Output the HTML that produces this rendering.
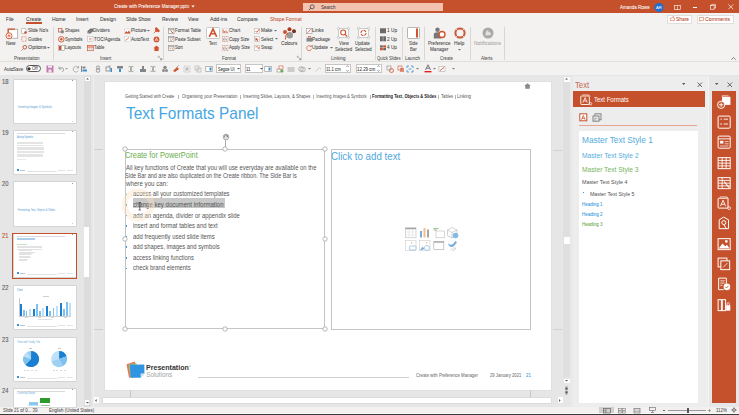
<!DOCTYPE html>
<html><head><meta charset="utf-8"><style>
html,body{margin:0;padding:0;}
body{width:739px;height:415px;overflow:hidden;position:relative;background:#E6E6E6;font-family:"Liberation Sans",sans-serif;}
body>*{position:absolute;}
span{white-space:nowrap;transform-origin:0 0;}
svg{overflow:visible;}
</style></head><body>
<div style="left:0px;top:0px;width:739.00px;height:13.00px;background:#C5502C;"></div>
<div style="left:0px;top:13px;width:739.00px;height:48.00px;background:#F3F2F1;"></div>
<div style="left:0px;top:61px;width:739.00px;height:1.00px;background:#E1DFDD;"></div>
<div style="left:0px;top:62px;width:739.00px;height:13.00px;background:#F3F2F1;"></div>
<div style="left:0px;top:75px;width:739.00px;height:331.70px;background:#E6E6E6;"></div>
<div style="left:0px;top:406.5px;width:739.00px;height:6.70px;background:#F3F1EF;"></div>
<div style="left:0px;top:413.2px;width:739.00px;height:0.80px;background:#F8F8F8;"></div>
<div style="left:0px;top:414px;width:739.00px;height:1.00px;background:#3A3A3A;"></div>
<span style="left:113.77px;top:4px;font-size:5.6px;line-height:5.6px;color:#ffffff;-webkit-text-stroke:0.06px #ffffff;transform:scaleX(0.811);">Create with Preference Manager.pptx</span>
<svg style="left:191px;top:5px;" width="4" height="3" viewBox="0 0 4 3"><path d="M0.3 0.5 L3.7 0.5 L2 2.5Z" fill="#fff"/></svg>
<div style="left:303px;top:2.5px;width:140.00px;height:8.00px;background:#F4C3AF;"></div>
<svg style="left:308px;top:3.5px;" width="7" height="7" viewBox="0 0 7 7"><circle cx="4.2" cy="2.8" r="2" fill="none" stroke="#444" stroke-width="0.8"/><path d="M2.8 4.2 L0.8 6.2" stroke="#444" stroke-width="0.9"/></svg>
<span style="left:320.82px;top:5px;font-size:5.4px;line-height:5.4px;color:#444444;-webkit-text-stroke:0.06px #444444;transform:scaleX(0.844);">Search</span>
<span style="left:620.30px;top:5px;font-size:5.6px;line-height:5.6px;color:#ffffff;-webkit-text-stroke:0.06px #ffffff;transform:scaleX(0.808);">Amanda Rowe</span>
<svg style="left:654px;top:2.5px;" width="10" height="10" viewBox="0 0 10 10"><circle cx="5" cy="4.5" r="4.6" fill="#1F6FD0"/><text x="5" y="6.2" font-size="4.2" fill="#fff" text-anchor="middle" font-family="Liberation Sans">AR</text></svg>
<svg style="left:674px;top:4.5px;" width="7" height="5" viewBox="0 0 7 5"><rect x="0.4" y="0.4" width="6.2" height="4.2" fill="none" stroke="#fff" stroke-width="0.6"/><path d="M3.5 0.4 V4.6" stroke="#fff" stroke-width="0.5"/></svg>
<div style="left:692.8px;top:6.6px;width:4.40px;height:0.60px;background:#ffffff;"></div>
<svg style="left:709.5px;top:4.3px;" width="6" height="6" viewBox="0 0 6 6"><rect x="0.4" y="1.6" width="3.8" height="3.6" fill="none" stroke="#fff" stroke-width="0.6"/><path d="M1.6 1.6 V0.4 H5.5 V4 H4.2" fill="none" stroke="#fff" stroke-width="0.6"/></svg>
<svg style="left:727.5px;top:4px;" width="6" height="6" viewBox="0 0 6 6"><path d="M0.4 0.4 L5.2 5.2 M5.2 0.4 L0.4 5.2" stroke="#fff" stroke-width="0.7"/></svg>
<span style="left:6.12px;top:17px;font-size:5.6px;line-height:5.6px;color:#444444;-webkit-text-stroke:0.06px #444444;transform:scaleX(0.848);">File</span>
<span style="left:25.74px;top:17px;font-size:5.6px;line-height:5.6px;color:#444444;-webkit-text-stroke:0.06px #444444;transform:scaleX(0.919);">Create</span>
<span style="left:51.59px;top:17px;font-size:5.6px;line-height:5.6px;color:#444444;-webkit-text-stroke:0.06px #444444;transform:scaleX(0.910);">Home</span>
<span style="left:76.36px;top:17px;font-size:5.6px;line-height:5.6px;color:#444444;-webkit-text-stroke:0.06px #444444;transform:scaleX(0.881);">Insert</span>
<span style="left:99.59px;top:17px;font-size:5.6px;line-height:5.6px;color:#444444;-webkit-text-stroke:0.06px #444444;transform:scaleX(0.924);">Design</span>
<span style="left:126.40px;top:17px;font-size:5.6px;line-height:5.6px;color:#444444;-webkit-text-stroke:0.06px #444444;transform:scaleX(0.873);">Slide Show</span>
<span style="left:161.51px;top:17px;font-size:5.6px;line-height:5.6px;color:#444444;-webkit-text-stroke:0.06px #444444;transform:scaleX(0.869);">Review</span>
<span style="left:187.90px;top:17px;font-size:5.6px;line-height:5.6px;color:#444444;-webkit-text-stroke:0.06px #444444;transform:scaleX(0.886);">View</span>
<span style="left:209.50px;top:17px;font-size:5.6px;line-height:5.6px;color:#444444;-webkit-text-stroke:0.06px #444444;transform:scaleX(0.919);">Add-ins</span>
<span style="left:237.45px;top:17px;font-size:5.6px;line-height:5.6px;color:#444444;-webkit-text-stroke:0.06px #444444;transform:scaleX(0.909);">Compare</span>
<span style="left:269.90px;top:17px;font-size:5.6px;line-height:5.6px;color:#C8573A;-webkit-text-stroke:0.06px #C8573A;transform:scaleX(0.890);">Shape Format</span>
<div style="left:26.2px;top:22.3px;width:15.80px;height:1.30px;background:#C5502C;"></div>
<div style="left:667px;top:14.5px;width:25.00px;height:9.00px;box-sizing:border-box;border:0.7px solid #E1DFDD;background:#ffffff;"></div>
<svg style="left:670.3px;top:16.3px;" width="5" height="5" viewBox="0 0 5 5"><path d="M0.4 2.2 H1.6 L2.9 0.5 H3.5 V2.2 H4.6 V4.6 H0.4 Z" fill="none" stroke="#C5502C" stroke-width="0.5"/></svg>
<span style="left:676.01px;top:17px;font-size:5.4px;line-height:5.4px;color:#B7472A;-webkit-text-stroke:0.06px #B7472A;transform:scaleX(0.900);">Share</span>
<div style="left:697px;top:14.5px;width:37.00px;height:9.00px;box-sizing:border-box;border:0.7px solid #E1DFDD;background:#ffffff;"></div>
<svg style="left:699px;top:16.5px;" width="5" height="5" viewBox="0 0 5 5"><path d="M0.4 0.4 H4.6 V3.4 H1.8 L0.9 4.5 V3.4 H0.4 Z" fill="none" stroke="#C5502C" stroke-width="0.5"/></svg>
<span style="left:705.04px;top:17px;font-size:5.4px;line-height:5.4px;color:#B7472A;-webkit-text-stroke:0.06px #B7472A;transform:scaleX(0.966);">Comments</span>
<div style="left:53.15px;top:27px;width:0.90px;height:33.00px;background:#D9D7D5;"></div>
<div style="left:163.05px;top:27px;width:0.90px;height:33.00px;background:#D9D7D5;"></div>
<div style="left:301.15000000000003px;top:27px;width:0.90px;height:33.00px;background:#D9D7D5;"></div>
<div style="left:375.05px;top:27px;width:0.90px;height:33.00px;background:#D9D7D5;"></div>
<div style="left:402.25px;top:27px;width:0.90px;height:33.00px;background:#D9D7D5;"></div>
<div style="left:424.15000000000003px;top:27px;width:0.90px;height:33.00px;background:#D9D7D5;"></div>
<div style="left:469.65000000000003px;top:27px;width:0.90px;height:33.00px;background:#D9D7D5;"></div>
<div style="left:503.75px;top:27px;width:0.90px;height:33.00px;background:#D9D7D5;"></div>
<span style="left:13.63px;top:56px;font-size:5.2px;line-height:5.2px;color:#555555;-webkit-text-stroke:0.06px #555555;transform:scaleX(0.878);">Presentation</span>
<span style="left:99.89px;top:56px;font-size:5.2px;line-height:5.2px;color:#555555;-webkit-text-stroke:0.06px #555555;transform:scaleX(0.869);">Insert</span>
<span style="left:222.04px;top:56px;font-size:5.2px;line-height:5.2px;color:#555555;-webkit-text-stroke:0.06px #555555;transform:scaleX(0.859);">Format</span>
<span style="left:330.63px;top:56px;font-size:5.2px;line-height:5.2px;color:#555555;-webkit-text-stroke:0.06px #555555;transform:scaleX(0.888);">Linking</span>
<span style="left:377.03px;top:56px;font-size:5.2px;line-height:5.2px;color:#555555;-webkit-text-stroke:0.06px #555555;transform:scaleX(0.817);">Quick Slides</span>
<span style="left:405.43px;top:56px;font-size:5.2px;line-height:5.2px;color:#555555;-webkit-text-stroke:0.06px #555555;transform:scaleX(0.881);">Launch</span>
<span style="left:440.49px;top:56px;font-size:5.2px;line-height:5.2px;color:#555555;-webkit-text-stroke:0.06px #555555;transform:scaleX(0.825);">Create</span>
<span style="left:481.40px;top:56px;font-size:5.2px;line-height:5.2px;color:#555555;-webkit-text-stroke:0.06px #555555;transform:scaleX(0.860);">Alerts</span>
<svg style="left:158px;top:56px;" width="4.5" height="4.5" viewBox="0 0 4.5 4.5"><path d="M0.3 0.3 H1.5 M0.3 0.3 V1.5 M1.2 1.2 L3.8 3.8 M3.8 2 V3.8 H2" fill="none" stroke="#777" stroke-width="0.6"/></svg>
<svg style="left:297px;top:56px;" width="4.5" height="4.5" viewBox="0 0 4.5 4.5"><path d="M0.3 0.3 H1.5 M0.3 0.3 V1.5 M1.2 1.2 L3.8 3.8 M3.8 2 V3.8 H2" fill="none" stroke="#777" stroke-width="0.6"/></svg>
<svg style="left:4.5px;top:27.5px;" width="14" height="11" viewBox="0 0 14 11"><rect x="3.2" y="1.2" width="9.5" height="9" fill="#fff" stroke="#9a9a9a" stroke-width="0.7"/><path d="M3.2 5.5 V1.2 H10" fill="none" stroke="#D0532F" stroke-width="1.3"/><circle cx="4" cy="7.8" r="3" fill="#fff" stroke="#D0532F" stroke-width="0.9"/><path d="M4 6.2 V9.4 M2.4 7.8 H5.6" stroke="#D0532F" stroke-width="0.8"/></svg>
<span style="left:6.32px;top:41px;font-size:5.1px;line-height:5.1px;color:#454545;-webkit-text-stroke:0.06px #454545;transform:scaleX(0.925);">New</span>
<svg style="left:20.5px;top:27.5px;" width="6" height="6" viewBox="0 0 6 6"><rect x="0.5" y="0.5" width="4.5" height="5" fill="#fff" stroke="#9a9a9a" stroke-width="0.6" rx="0.8"/><circle cx="4.5" cy="4.5" r="1.3" fill="#D0532F"/></svg>
<span style="left:27.62px;top:28px;font-size:5.1px;line-height:5.1px;color:#454545;-webkit-text-stroke:0.06px #454545;transform:scaleX(0.891);">Slide No's</span>
<svg style="left:20.5px;top:36.3px;" width="6" height="6" viewBox="0 0 6 6"><rect x="0.8" y="0.8" width="4.4" height="4.4" fill="none" stroke="#D0532F" stroke-width="0.6" stroke-dasharray="1 0.8"/></svg>
<span style="left:27.58px;top:37px;font-size:5.1px;line-height:5.1px;color:#454545;-webkit-text-stroke:0.06px #454545;transform:scaleX(0.870);">Guides</span>
<svg style="left:20.5px;top:45px;" width="6" height="6" viewBox="0 0 6 6"><circle cx="3.8" cy="2.2" r="1.8" fill="none" stroke="#D0532F" stroke-width="1"/><path d="M2.5 3.5 L0.5 5.5" stroke="#888" stroke-width="0.9"/></svg>
<span style="left:27.58px;top:45px;font-size:5.1px;line-height:5.1px;color:#454545;-webkit-text-stroke:0.06px #454545;transform:scaleX(1.057);">Options</span>
<svg style="left:46.5px;top:47px;" width="3" height="2" viewBox="0 0 3 2"><path d="M0 0 H3 L1.5 1.6Z" fill="#666"/></svg>
<svg style="left:58px;top:27.5px;" width="7" height="6" viewBox="0 0 7 6"><rect x="0.5" y="0.5" width="3.5" height="3.5" fill="none" stroke="#D0532F" stroke-width="0.7"/><circle cx="4.3" cy="3.8" r="1.8" fill="#888"/></svg>
<span style="left:65.23px;top:28px;font-size:5.1px;line-height:5.1px;color:#454545;-webkit-text-stroke:0.06px #454545;transform:scaleX(0.832);">Shapes</span>
<svg style="left:58px;top:36px;" width="7" height="7" viewBox="0 0 7 7"><circle cx="3.3" cy="3.3" r="2.8" fill="none" stroke="#D0532F" stroke-width="0.9"/><circle cx="3.3" cy="3.3" r="1.2" fill="#D0532F"/></svg>
<span style="left:65.22px;top:37px;font-size:5.1px;line-height:5.1px;color:#454545;-webkit-text-stroke:0.06px #454545;transform:scaleX(0.901);">Symbols</span>
<svg style="left:58px;top:44.7px;" width="7" height="6" viewBox="0 0 7 6"><rect x="0.5" y="0.5" width="6" height="5" fill="#fff" stroke="#999" stroke-width="0.6"/><rect x="1" y="1" width="2.5" height="4" fill="#D0532F"/></svg>
<span style="left:65.03px;top:45px;font-size:5.1px;line-height:5.1px;color:#454545;-webkit-text-stroke:0.06px #454545;transform:scaleX(0.896);">Layouts</span>
<svg style="left:86.7px;top:27.5px;" width="7" height="6" viewBox="0 0 7 6"><path d="M0.5 3 L3.5 0.5 L6.3 0.7 L6.3 3 L3.5 5.5 L0.5 5.5Z" fill="#6e6e6e"/><path d="M1 5 L4 2.5" stroke="#ccc" stroke-width="0.4"/></svg>
<span style="left:93.43px;top:28px;font-size:5.1px;line-height:5.1px;color:#454545;-webkit-text-stroke:0.06px #454545;transform:scaleX(0.907);">Dividers</span>
<svg style="left:86.7px;top:36.2px;" width="7" height="6" viewBox="0 0 7 6"><rect x="0.5" y="0.5" width="5.5" height="5" fill="#fff" stroke="#bbb" stroke-width="0.6"/><path d="M2 2.5 H4.5 M2 3.8 H4.5" stroke="#D0532F" stroke-width="0.5"/></svg>
<span style="left:93.71px;top:37px;font-size:5.1px;line-height:5.1px;color:#454545;-webkit-text-stroke:0.06px #454545;transform:scaleX(0.885);">TOC/Agenda</span>
<svg style="left:86.7px;top:44.7px;" width="7" height="6" viewBox="0 0 7 6"><rect x="0.5" y="0.5" width="5.8" height="5.2" fill="#fff" stroke="#D0532F" stroke-width="0.7"/><path d="M0.5 2 H6.3" stroke="#D0532F" stroke-width="1"/><path d="M2.4 2 V5.7 M4.4 2 V5.7 M0.5 3.8 H6.3" stroke="#aaa" stroke-width="0.4"/></svg>
<span style="left:93.71px;top:45px;font-size:5.1px;line-height:5.1px;color:#454545;-webkit-text-stroke:0.06px #454545;transform:scaleX(0.857);">Table</span>
<svg style="left:124px;top:27.5px;" width="7" height="6" viewBox="0 0 7 6"><rect x="0.5" y="1" width="6" height="4.5" fill="#fff" stroke="#ccc" stroke-width="0.5"/><path d="M0.5 5.5 L2.2 3 L3.5 4.3 L5 2.5 L6.5 5.5Z" fill="#D0532F"/></svg>
<span style="left:130.60px;top:28px;font-size:5.1px;line-height:5.1px;color:#454545;-webkit-text-stroke:0.06px #454545;transform:scaleX(0.982);">Picture</span>
<svg style="left:147px;top:29.5px;" width="3" height="2" viewBox="0 0 3 2"><path d="M0 0 H3 L1.5 1.6Z" fill="#666"/></svg>
<svg style="left:124px;top:36.2px;" width="7" height="6" viewBox="0 0 7 6"><rect x="0.5" y="0.5" width="6" height="5" fill="#fff" stroke="#ccc" stroke-width="0.5"/><path d="M1.5 4.5 L5 1.5" stroke="#D0532F" stroke-width="0.8"/></svg>
<span style="left:131.00px;top:37px;font-size:5.1px;line-height:5.1px;color:#454545;-webkit-text-stroke:0.06px #454545;transform:scaleX(0.907);">AutoText</span>
<svg style="left:153px;top:27px;" width="7" height="7" viewBox="0 0 7 7"><path d="M3.2 1.6 L5.4 3.8" stroke="#D0532F" stroke-width="2.6" stroke-linecap="round"/><path d="M2.2 3.2 L3.8 4.8" stroke="#D0532F" stroke-width="1.5"/><path d="M3.3 3.7 L0.6 6.4" stroke="#D0532F" stroke-width="0.7"/></svg>
<svg style="left:153px;top:36px;" width="7" height="7" viewBox="0 0 7 7"><circle cx="3.5" cy="3.4" r="2.9" fill="#D0532F"/><path d="M2.2 5 L3.5 1.8 L4.8 5 M2.7 4 H4.3" stroke="#fff" stroke-width="0.6" fill="none"/></svg>
<svg style="left:153px;top:44.5px;" width="7" height="7" viewBox="0 0 7 7"><path d="M3.5 0.5 L6.6 3.3 H5.6 V6 H1.4 V3.3 H0.4Z" fill="#D0532F"/></svg>
<svg style="left:167.5px;top:27.5px;" width="7" height="6" viewBox="0 0 7 6"><rect x="0.5" y="0.5" width="5.5" height="5" fill="#fff" stroke="#888" stroke-width="0.6"/><path d="M0.5 1.8 H6 " stroke="#888" stroke-width="0.8"/><path d="M2.5 2.8 L5.2 5.2" stroke="#D0532F" stroke-width="1"/></svg>
<span style="left:175.24px;top:28px;font-size:5.1px;line-height:5.1px;color:#454545;-webkit-text-stroke:0.06px #454545;transform:scaleX(0.881);">Format Table</span>
<svg style="left:167.5px;top:36.2px;" width="7" height="6" viewBox="0 0 7 6"><rect x="0.5" y="0.5" width="5.5" height="5" fill="#fff" stroke="#888" stroke-width="0.6"/><path d="M0.5 1.8 H6" stroke="#888" stroke-width="0.8"/><path d="M2 3.5 L3.2 4.6 L4.8 3" fill="none" stroke="#D0532F" stroke-width="0.7"/></svg>
<span style="left:175.26px;top:37px;font-size:5.1px;line-height:5.1px;color:#454545;-webkit-text-stroke:0.06px #454545;transform:scaleX(0.838);">Paste Subset</span>
<svg style="left:167.5px;top:44.7px;" width="7" height="6" viewBox="0 0 7 6"><rect x="0.5" y="0.5" width="5.5" height="5" fill="#fff" stroke="#888" stroke-width="0.6"/><path d="M0.5 1.8 H6" stroke="#888" stroke-width="0.8"/><path d="M1.5 3.8 H2.8 M3.8 3.8 H5" stroke="#D0532F" stroke-width="0.8"/></svg>
<span style="left:175.43px;top:45px;font-size:5.1px;line-height:5.1px;color:#454545;-webkit-text-stroke:0.06px #454545;transform:scaleX(0.830);">Sort</span>
<svg style="left:205.5px;top:26.8px;" width="14" height="12" viewBox="0 0 14 12"><rect x="0.5" y="0.5" width="13" height="11" rx="1" fill="#fff" stroke="#a8a8a8" stroke-width="0.6"/><path d="M3.3 9.8 L7 1.8 L10.7 9.8 M4.7 6.8 H9.3" fill="none" stroke="#D0532F" stroke-width="1.6"/></svg>
<span style="left:208.52px;top:41px;font-size:5.1px;line-height:5.1px;color:#454545;-webkit-text-stroke:0.06px #454545;transform:scaleX(0.810);">Text</span>
<svg style="left:221.5px;top:27.5px;" width="7" height="6" viewBox="0 0 7 6"><rect x="0.5" y="0.5" width="5.5" height="5" fill="#fff" stroke="#ccc" stroke-width="0.5"/><path d="M1.2 5 V1.5 M2.6 5 V3 M4 5 V2.2 M5.2 5 V3.6" stroke="#D0532F" stroke-width="0.8"/></svg>
<span style="left:228.67px;top:28px;font-size:5.1px;line-height:5.1px;color:#454545;-webkit-text-stroke:0.06px #454545;transform:scaleX(0.900);">Chart</span>
<svg style="left:221.5px;top:36.2px;" width="7" height="6" viewBox="0 0 7 6"><path d="M0.5 0.5 H6 V5.5 H0.5Z" fill="none" stroke="#D0532F" stroke-width="0.5" stroke-dasharray="1 0.7"/><path d="M1.5 4.5 V2.5 M3 4.5 V1.5 M4.5 4.5 V3" stroke="#888" stroke-width="0.7"/></svg>
<span style="left:228.68px;top:37px;font-size:5.1px;line-height:5.1px;color:#454545;-webkit-text-stroke:0.06px #454545;transform:scaleX(0.868);">Copy Size</span>
<svg style="left:221.5px;top:44.7px;" width="7" height="6" viewBox="0 0 7 6"><path d="M0.5 0.5 H6 V5.5 H0.5Z" fill="none" stroke="#D0532F" stroke-width="0.5" stroke-dasharray="1 0.7"/><path d="M1.5 4.5 V2.5 M3 4.5 V1.5 M4.5 4.5 V3" stroke="#888" stroke-width="0.7"/></svg>
<span style="left:228.90px;top:45px;font-size:5.1px;line-height:5.1px;color:#454545;-webkit-text-stroke:0.06px #454545;transform:scaleX(0.866);">Apply Size</span>
<svg style="left:254px;top:27.5px;" width="7" height="6" viewBox="0 0 7 6"><rect x="0.5" y="0.5" width="5" height="5" fill="#fff" stroke="#aaa" stroke-width="0.5"/><path d="M1.5 3 L2.8 4.3 L5.5 1" fill="none" stroke="#D0532F" stroke-width="0.9"/></svg>
<span style="left:260.63px;top:28px;font-size:5.1px;line-height:5.1px;color:#454545;-webkit-text-stroke:0.06px #454545;transform:scaleX(0.918);">Make</span>
<svg style="left:273.5px;top:29.5px;" width="3" height="2" viewBox="0 0 3 2"><path d="M0 0 H3 L1.5 1.6Z" fill="#666"/></svg>
<svg style="left:254px;top:36.2px;" width="7" height="6" viewBox="0 0 7 6"><rect x="0.5" y="0.5" width="5" height="5" fill="#fff" stroke="#aaa" stroke-width="0.5"/><path d="M1.5 1.5 L1.5 5 L2.5 4 L3.8 5.5 L4.3 5 L3.2 3.6 L4.6 3.4Z" fill="#D0532F"/></svg>
<span style="left:260.82px;top:37px;font-size:5.1px;line-height:5.1px;color:#454545;-webkit-text-stroke:0.06px #454545;transform:scaleX(0.873);">Select</span>
<svg style="left:275px;top:38.1px;" width="3" height="2" viewBox="0 0 3 2"><path d="M0 0 H3 L1.5 1.6Z" fill="#666"/></svg>
<svg style="left:254px;top:44.7px;" width="7" height="6" viewBox="0 0 7 6"><rect x="0.5" y="0.5" width="5" height="5" fill="#fff" stroke="#aaa" stroke-width="0.5"/><path d="M1.5 2 Q3.5 0.5 4.8 3.5 M4.8 3.5 L5.2 2.3 M4.8 3.5 L3.7 3" fill="none" stroke="#D0532F" stroke-width="0.7"/></svg>
<span style="left:260.82px;top:45px;font-size:5.1px;line-height:5.1px;color:#454545;-webkit-text-stroke:0.06px #454545;transform:scaleX(0.881);">Swap</span>
<svg style="left:282px;top:26.5px;" width="15" height="13" viewBox="0 0 15 13"><circle cx="3" cy="5" r="2" fill="#D0532F"/><circle cx="7.5" cy="2.2" r="2" fill="#A83C22"/><circle cx="12" cy="4.3" r="2" fill="#7a3020"/><circle cx="7.8" cy="8.2" r="3.2" fill="#9a9a9a"/><path d="M3.5 12.5 Q3 8 6 6" stroke="#D0532F" stroke-width="1" fill="none"/></svg>
<span style="left:281.46px;top:41px;font-size:5.1px;line-height:5.1px;color:#454545;-webkit-text-stroke:0.06px #454545;transform:scaleX(0.926);">Colours</span>
<svg style="left:305.5px;top:27.5px;" width="7" height="6" viewBox="0 0 7 6"><rect x="0.5" y="0.5" width="5.5" height="5.2" fill="#fff" stroke="#999" stroke-width="0.6"/><path d="M1.5 4.8 L5 1.2" stroke="#D0532F" stroke-width="0.9"/></svg>
<span style="left:312.20px;top:28px;font-size:5.1px;line-height:5.1px;color:#454545;-webkit-text-stroke:0.06px #454545;transform:scaleX(0.978);">Links</span>
<svg style="left:305.5px;top:36.2px;" width="7" height="6" viewBox="0 0 7 6"><rect x="0.5" y="1.8" width="6" height="3.8" fill="#888"/><path d="M2.3 1.8 V0.5 H4.7 V1.8" fill="none" stroke="#D0532F" stroke-width="0.7"/></svg>
<span style="left:312.23px;top:37px;font-size:5.1px;line-height:5.1px;color:#454545;-webkit-text-stroke:0.06px #454545;transform:scaleX(0.914);">Package</span>
<svg style="left:306px;top:45px;" width="6" height="6" viewBox="0 0 6 6"><path d="M5.2 1.8 A2.5 2.5 0 1 0 5.5 3.8" fill="none" stroke="#D0532F" stroke-width="0.7"/><path d="M3.9 1.6 H5.4 V0.2" fill="none" stroke="#D0532F" stroke-width="0.6"/></svg>
<span style="left:312.25px;top:45px;font-size:5.1px;line-height:5.1px;color:#454545;-webkit-text-stroke:0.06px #454545;transform:scaleX(0.968);">Update</span>
<svg style="left:329.5px;top:47px;" width="3" height="2" viewBox="0 0 3 2"><path d="M0 0 H3 L1.5 1.6Z" fill="#666"/></svg>
<svg style="left:337px;top:26.8px;" width="13" height="12" viewBox="0 0 13 12"><rect x="1.5" y="1.5" width="10" height="9" fill="#fff" stroke="#a0a0a0" stroke-width="0.5"/><circle cx="1.5" cy="1.5" r="1.1" fill="#fff" stroke="#888" stroke-width="0.4"/><circle cx="11.5" cy="1.5" r="1.1" fill="#fff" stroke="#888" stroke-width="0.4"/><circle cx="1.5" cy="10.5" r="1.1" fill="#fff" stroke="#888" stroke-width="0.4"/><circle cx="11.5" cy="10.5" r="1.1" fill="#fff" stroke="#888" stroke-width="0.4"/><circle cx="6.2" cy="5.5" r="2.5" fill="none" stroke="#D0532F" stroke-width="1.1"/><path d="M8 7.3 L10 9.5" stroke="#D0532F" stroke-width="1.2"/></svg>
<span style="left:339.40px;top:41px;font-size:5.1px;line-height:5.1px;color:#454545;-webkit-text-stroke:0.06px #454545;transform:scaleX(0.891);">View</span>
<span style="left:335.42px;top:47px;font-size:5.1px;line-height:5.1px;color:#454545;-webkit-text-stroke:0.06px #454545;transform:scaleX(0.863);">Selected</span>
<svg style="left:357px;top:26.8px;" width="13" height="12" viewBox="0 0 13 12"><rect x="1.5" y="1.5" width="10" height="9" fill="#fff" stroke="#a0a0a0" stroke-width="0.5"/><circle cx="1.5" cy="1.5" r="1.1" fill="#fff" stroke="#888" stroke-width="0.4"/><circle cx="11.5" cy="1.5" r="1.1" fill="#fff" stroke="#888" stroke-width="0.4"/><circle cx="1.5" cy="10.5" r="1.1" fill="#fff" stroke="#888" stroke-width="0.4"/><circle cx="11.5" cy="10.5" r="1.1" fill="#fff" stroke="#888" stroke-width="0.4"/><circle cx="6.5" cy="6" r="2.6" fill="none" stroke="#D0532F" stroke-width="1.1" stroke-dasharray="3 1"/></svg>
<span style="left:355.38px;top:41px;font-size:5.1px;line-height:5.1px;color:#454545;-webkit-text-stroke:0.06px #454545;transform:scaleX(0.899);">Update</span>
<span style="left:354.53px;top:47px;font-size:5.1px;line-height:5.1px;color:#454545;-webkit-text-stroke:0.06px #454545;transform:scaleX(0.842);">Selected</span>
<svg style="left:379.8px;top:27.5px;" width="6" height="6" viewBox="0 0 6 6"><rect x="0" y="0.3" width="6" height="5" fill="#6a6a6a"/></svg>
<span style="left:387.07px;top:28px;font-size:5.1px;line-height:5.1px;color:#454545;-webkit-text-stroke:0.06px #454545;transform:scaleX(0.938);">1 Up</span>
<svg style="left:379.8px;top:36.2px;" width="6" height="6" viewBox="0 0 6 6"><rect x="0" y="0.3" width="2.8" height="5" fill="#6a6a6a"/><rect x="3.2" y="0.3" width="2.8" height="5" fill="#6a6a6a"/></svg>
<span style="left:387.16px;top:37px;font-size:5.1px;line-height:5.1px;color:#454545;-webkit-text-stroke:0.06px #454545;transform:scaleX(0.929);">2 Up</span>
<svg style="left:379.8px;top:44.7px;" width="6" height="6" viewBox="0 0 6 6"><rect x="0" y="0.3" width="2.8" height="2.3" fill="#6a6a6a"/><rect x="3.2" y="0.3" width="2.8" height="2.3" fill="#D0532F"/><rect x="0" y="3" width="2.8" height="2.3" fill="#D0532F"/><rect x="3.2" y="3" width="2.8" height="2.3" fill="#6a6a6a"/></svg>
<span style="left:387.31px;top:45px;font-size:5.1px;line-height:5.1px;color:#454545;-webkit-text-stroke:0.06px #454545;transform:scaleX(0.915);">4 Up</span>
<svg style="left:406.5px;top:27px;" width="13" height="12" viewBox="0 0 13 12"><rect x="0.5" y="0.5" width="12" height="11" rx="1" fill="#fff" stroke="#999" stroke-width="0.7"/><rect x="9" y="1.5" width="2" height="9" fill="#D0532F"/></svg>
<span style="left:409.33px;top:41px;font-size:5.1px;line-height:5.1px;color:#454545;-webkit-text-stroke:0.06px #454545;transform:scaleX(0.835);">Side</span>
<span style="left:410.16px;top:47px;font-size:5.1px;line-height:5.1px;color:#454545;-webkit-text-stroke:0.06px #454545;transform:scaleX(0.831);">Bar</span>
<svg style="left:432.5px;top:27px;" width="13" height="12" viewBox="0 0 13 12"><circle cx="4.5" cy="2.8" r="2.2" fill="#777"/><path d="M0.8 11.5 V7.5 Q0.8 5.2 4.5 5.2 Q8.2 5.2 8.2 7.5 V11.5Z" fill="#777"/><circle cx="9" cy="7.5" r="3" fill="#fff" stroke="#D0532F" stroke-width="1.4"/></svg>
<span style="left:427.63px;top:41px;font-size:5.1px;line-height:5.1px;color:#454545;-webkit-text-stroke:0.06px #454545;transform:scaleX(0.903);">Preference</span>
<span style="left:429.93px;top:47px;font-size:5.1px;line-height:5.1px;color:#454545;-webkit-text-stroke:0.06px #454545;transform:scaleX(0.911);">Manager</span>
<svg style="left:453.5px;top:26.8px;" width="12" height="12" viewBox="0 0 12 12"><circle cx="6" cy="6" r="4.6" fill="none" stroke="#D0532F" stroke-width="2"/><path d="M2.3 2.3 L3.6 3.6 M9.7 2.3 L8.4 3.6 M2.3 9.7 L3.6 8.4 M9.7 9.7 L8.4 8.4" stroke="#fff" stroke-width="1"/><circle cx="6" cy="6" r="5.7" fill="none" stroke="#bbb" stroke-width="0.3"/></svg>
<span style="left:453.60px;top:41px;font-size:5.1px;line-height:5.1px;color:#454545;-webkit-text-stroke:0.06px #454545;transform:scaleX(0.990);">Help</span>
<svg style="left:457.5px;top:49px;" width="3" height="2" viewBox="0 0 3 2"><path d="M0 0 H3 L1.5 1.6Z" fill="#666"/></svg>
<svg style="left:481.5px;top:27px;" width="12" height="12" viewBox="0 0 12 12"><circle cx="6" cy="6" r="5.5" fill="#a9a9a9"/><path d="M3.5 8.5 Q3.5 3.5 6.5 3 Q8.8 3.4 8.5 6.5 L9 8Z" fill="#e3e3e3"/><circle cx="7.6" cy="4" r="1.4" fill="#a9a9a9"/></svg>
<span style="left:473.51px;top:41px;font-size:5.5px;line-height:5.5px;color:#a6a6a6;-webkit-text-stroke:0.06px #a6a6a6;transform:scaleX(0.896);">Notifications</span>
<svg style="left:731px;top:57px;" width="5" height="3" viewBox="0 0 5 3"><path d="M0.3 2.7 L2.5 0.5 L4.7 2.7" fill="none" stroke="#555" stroke-width="0.7"/></svg>
<span style="left:4.00px;top:67px;font-size:5.5px;line-height:5.5px;color:#444444;-webkit-text-stroke:0.06px #444444;transform:scaleX(0.803);">AutoSave</span>
<div style="left:25.5px;top:64.8px;width:15.30px;height:7.50px;box-sizing:border-box;border:0.7px solid #555;background:#fff;border-radius:4px;"></div>
<svg style="left:27px;top:67px;" width="4" height="4" viewBox="0 0 4 4"><circle cx="2" cy="1.8" r="1.6" fill="#333"/></svg>
<span style="left:32.33px;top:67px;font-size:4.6px;line-height:4.6px;color:#444444;-webkit-text-stroke:0.06px #444444;transform:scaleX(0.936);">Off</span>
<svg style="left:45.8px;top:65.3px;" width="8" height="8" viewBox="0 0 8 8"><rect x="0.5" y="0.5" width="7" height="7" fill="#C27BB0"/><rect x="2" y="0.5" width="4" height="2.3" fill="#f3e3ee"/><rect x="2.5" y="4.5" width="3" height="3" fill="#f3e3ee"/></svg>
<svg style="left:56.5px;top:65.2px;" width="8" height="8" viewBox="0 0 8 8"><path d="M2 1.5 V4 H4.5" fill="none" stroke="#888" stroke-width="0.7"/><path d="M2.2 3.8 Q4 1.5 6 3 Q7.5 4.5 5.5 7" fill="none" stroke="#888" stroke-width="0.7"/></svg>
<svg style="left:65px;top:67.5px;" width="3" height="2" viewBox="0 0 3 2"><path d="M0 0 H3 L1.5 1.6Z" fill="#999"/></svg>
<svg style="left:71.5px;top:65.2px;" width="8" height="8" viewBox="0 0 8 8"><path d="M6.42 2.8 A2.8 2.8 0 1 0 6.42 5.6" fill="none" stroke="#999" stroke-width="0.7"/><path d="M6.6 0.9 V3 H4.5" fill="none" stroke="#999" stroke-width="0.7"/></svg>
<svg style="left:79.5px;top:65.2px;" width="8" height="8" viewBox="0 0 8 8"><rect x="1" y="1" width="1" height="6" fill="#858585"/><rect x="2.5" y="1.5" width="3" height="2" fill="#858585"/><rect x="2.5" y="4.5" width="4.5" height="2" fill="#3A8FD0"/></svg>
<svg style="left:93.5px;top:65.2px;" width="8" height="8" viewBox="0 0 8 8"><circle cx="4" cy="2.5" r="1.6" fill="none" stroke="#858585" stroke-width="0.8"/><circle cx="4" cy="5.5" r="1.8" fill="none" stroke="#858585" stroke-width="0.8"/></svg>
<svg style="left:104.5px;top:65.2px;" width="8" height="8" viewBox="0 0 8 8"><rect x="1" y="2" width="4" height="4" fill="none" stroke="#858585" stroke-width="0.8"/><rect x="5.5" y="3" width="1.5" height="4" fill="#3A8FD0"/><path d="M3 1 H6" stroke="#858585" stroke-width="0.6"/></svg>
<svg style="left:116px;top:65.2px;" width="8" height="8" viewBox="0 0 8 8"><rect x="1" y="1" width="6" height="2.5" fill="#858585"/><rect x="3" y="3.5" width="2" height="3.5" fill="#3A8FD0"/></svg>
<svg style="left:127px;top:65.2px;" width="8" height="8" viewBox="0 0 8 8"><path d="M1.5 2 Q4 0 4 4 Q4 8 1.5 6" fill="none" stroke="#858585" stroke-width="0.8"/><path d="M6.5 2 Q4 0 4 4 Q4 8 6.5 6" fill="none" stroke="#858585" stroke-width="0.8"/></svg>
<svg style="left:138.5px;top:65.2px;" width="8" height="8" viewBox="0 0 8 8"><rect x="1" y="4" width="6" height="3" fill="#858585"/><rect x="3" y="1" width="2" height="3" fill="#858585"/><rect x="2" y="5" width="1" height="1" fill="#3A8FD0"/></svg>
<svg style="left:149px;top:65.2px;" width="8" height="8" viewBox="0 0 8 8"><path d="M1.5 2 Q4 0 4 4 Q4 8 1.5 6" fill="none" stroke="#858585" stroke-width="0.8"/><path d="M6.5 2 Q4 0 4 4 Q4 8 6.5 6" fill="none" stroke="#858585" stroke-width="0.8"/></svg>
<svg style="left:160.5px;top:65.2px;" width="8" height="8" viewBox="0 0 8 8"><circle cx="4" cy="2.5" r="1.8" fill="#8a8a8a"/><circle cx="2.5" cy="5.5" r="1.5" fill="#8a8a8a"/><circle cx="5.5" cy="5.5" r="1.5" fill="#8a8a8a"/></svg>
<svg style="left:171.5px;top:65.2px;" width="8" height="8" viewBox="0 0 8 8"><path d="M1 6 L5 2 L7 4 L3 7Z" fill="#D0532F"/><path d="M5 2 L6.5 0.5" stroke="#858585" stroke-width="0.8"/></svg>
<svg style="left:182.5px;top:65.2px;" width="8" height="8" viewBox="0 0 8 8"><rect x="1" y="1" width="6" height="6" fill="none" stroke="#aaa" stroke-width="0.6" stroke-dasharray="1 0.6"/><rect x="2.5" y="2.5" width="3" height="3" fill="#bbb"/></svg>
<svg style="left:194px;top:65.2px;" width="8" height="8" viewBox="0 0 8 8"><rect x="1" y="1" width="4" height="4" fill="none" stroke="#aaa" stroke-width="0.6"/><rect x="3" y="3" width="4" height="4" fill="none" stroke="#aaa" stroke-width="0.6"/></svg>
<svg style="left:205px;top:65.2px;" width="8" height="8" viewBox="0 0 8 8"><rect x="0.8" y="1.5" width="6.4" height="5" fill="#fff" stroke="#8a8a8a" stroke-width="0.6"/><rect x="4.5" y="2.5" width="2" height="3" fill="#3A8FD0"/></svg>
<svg style="left:264px;top:65.2px;" width="8" height="8" viewBox="0 0 8 8"><rect x="0.8" y="1.5" width="6.4" height="5" fill="#fff" stroke="#8a8a8a" stroke-width="0.6"/><rect x="4.5" y="2.5" width="2" height="3" fill="#3A8FD0"/></svg>
<svg style="left:276px;top:65.2px;" width="8" height="8" viewBox="0 0 8 8"><rect x="1" y="4" width="4" height="3" fill="#fff" stroke="#858585" stroke-width="0.6"/><rect x="3" y="1" width="4" height="3" fill="#fff" stroke="#D0532F" stroke-width="0.6"/><circle cx="6" cy="6" r="1.5" fill="#6aaa50"/></svg>
<svg style="left:287px;top:65.2px;" width="8" height="8" viewBox="0 0 8 8"><rect x="0.5" y="2" width="7" height="5" fill="#ccc"/></svg>
<svg style="left:298px;top:65.2px;" width="8" height="8" viewBox="0 0 8 8"><circle cx="3" cy="4" r="2.3" fill="none" stroke="#999" stroke-width="0.7"/><circle cx="5" cy="4.5" r="2.3" fill="none" stroke="#999" stroke-width="0.7"/></svg>
<svg style="left:314px;top:65.2px;" width="8" height="8" viewBox="0 0 8 8"><path d="M1.5 6.5 L5.5 2.5 L7 4" fill="none" stroke="#bbb" stroke-width="0.7"/></svg>
<svg style="left:386px;top:65.2px;" width="8" height="8" viewBox="0 0 8 8"><rect x="1" y="1" width="4" height="4" fill="none" stroke="#888" stroke-width="0.6"/><circle cx="5.5" cy="5.5" r="2" fill="none" stroke="#D0532F" stroke-width="0.8"/></svg>
<svg style="left:397px;top:65.2px;" width="8" height="8" viewBox="0 0 8 8"><rect x="1" y="1" width="4" height="4" fill="none" stroke="#D0532F" stroke-width="0.6"/><rect x="3" y="3" width="4" height="4" fill="#D0532F" opacity="0.6"/></svg>
<svg style="left:406px;top:65.2px;" width="8" height="8" viewBox="0 0 8 8"><path d="M1 1 H3 M1 1 V3 M7 1 H5 M7 1 V3 M1 7 H3 M1 7 V5 M7 7 H5 M7 7 V5" stroke="#3A8FD0" stroke-width="0.8" fill="none"/><path d="M2.5 4 H5.5" stroke="#3A8FD0" stroke-width="0.8"/></svg>
<svg style="left:438px;top:65.2px;" width="8" height="8" viewBox="0 0 8 8"><rect x="1" y="1.5" width="6" height="5" fill="#fff" stroke="#aaa" stroke-width="0.6"/><path d="M2 5.5 L6 2.5" stroke="#D0532F" stroke-width="0.9"/></svg>
<svg style="left:307.5px;top:67.5px;" width="3" height="2" viewBox="0 0 3 2"><path d="M0 0 H3 L1.5 1.6Z" fill="#777"/></svg>
<svg style="left:415.5px;top:67.5px;" width="3" height="2" viewBox="0 0 3 2"><path d="M0 0 H3 L1.5 1.6Z" fill="#777"/></svg>
<svg style="left:432.5px;top:67.5px;" width="3" height="2" viewBox="0 0 3 2"><path d="M0 0 H3 L1.5 1.6Z" fill="#777"/></svg>
<svg style="left:451.5px;top:67.5px;" width="3" height="2" viewBox="0 0 3 2"><path d="M0 0 H3 L1.5 1.6Z" fill="#777"/></svg>
<svg style="left:423.5px;top:64px;" width="8" height="9" viewBox="0 0 8 9"><path d="M1.5 6 L4 0.8 L6.5 6 M2.5 4.2 H5.5" fill="none" stroke="#444" stroke-width="0.7"/><rect x="0.5" y="7" width="7" height="1.4" fill="#E02020"/></svg>
<div style="left:216.4px;top:64px;width:24.30px;height:9.00px;box-sizing:border-box;border:0.6px solid #C8C6C4;background:#ffffff;"></div>
<span style="left:218.34px;top:67px;font-size:5.4px;line-height:5.4px;color:#333333;-webkit-text-stroke:0.05px #333333;transform:scaleX(0.733);">Segoe UI</span>
<div style="left:244.6px;top:64px;width:18.00px;height:9.00px;box-sizing:border-box;border:0.6px solid #C8C6C4;background:#ffffff;"></div>
<span style="left:246.20px;top:67px;font-size:5.4px;line-height:5.4px;color:#333333;-webkit-text-stroke:0.05px #333333;transform:scaleX(0.803);">11</span>
<div style="left:324.5px;top:64px;width:26.50px;height:9.00px;box-sizing:border-box;border:0.6px solid #C8C6C4;background:#ffffff;"></div>
<span style="left:326.00px;top:67px;font-size:5.4px;line-height:5.4px;color:#333333;-webkit-text-stroke:0.05px #333333;transform:scaleX(0.785);">11.1 cm</span>
<div style="left:355.7px;top:64px;width:26.00px;height:9.00px;box-sizing:border-box;border:0.6px solid #C8C6C4;background:#ffffff;"></div>
<span style="left:356.69px;top:67px;font-size:5.4px;line-height:5.4px;color:#333333;-webkit-text-stroke:0.05px #333333;transform:scaleX(0.819);">12.29 cm</span>
<svg style="left:237px;top:67.5px;" width="3" height="2" viewBox="0 0 3 2"><path d="M0 0 H3 L1.5 1.6Z" fill="#555"/></svg>
<svg style="left:259.5px;top:67.5px;" width="3" height="2" viewBox="0 0 3 2"><path d="M0 0 H3 L1.5 1.6Z" fill="#555"/></svg>
<svg style="left:346.0px;top:65.3px;" width="3" height="7" viewBox="0 0 3 7"><path d="M0.3 2 L1.5 0.5 L2.7 2 M0.3 5 L1.5 6.5 L2.7 5" fill="none" stroke="#555" stroke-width="0.5"/></svg>
<svg style="left:377.0px;top:65.3px;" width="3" height="7" viewBox="0 0 3 7"><path d="M0.3 2 L1.5 0.5 L2.7 2 M0.3 5 L1.5 6.5 L2.7 5" fill="none" stroke="#555" stroke-width="0.5"/></svg>
<div style="left:0px;top:75.7px;width:93.00px;height:331.00px;background:#E6E6E6;"></div>
<div style="left:84px;top:75.7px;width:6.50px;height:331.00px;background:#DCDCDC;"></div>
<div style="left:84.6px;top:76.6px;width:5.00px;height:4.60px;background:#FFFFFF;"></div>
<svg style="left:85.6px;top:77.8px;" width="3" height="2" viewBox="0 0 3 2"><path d="M0 1.6 H3 L1.5 0Z" fill="#555"/></svg>
<div style="left:84.4px;top:227px;width:5.00px;height:49.50px;background:#FFFFFF;"></div>
<div style="left:84.9px;top:400.3px;width:4.60px;height:4.60px;background:#FFFFFF;"></div>
<svg style="left:85.7px;top:402px;" width="3" height="2" viewBox="0 0 3 2"><path d="M0 0 H3 L1.5 1.6Z" fill="#555"/></svg>
<div style="left:93px;top:75.7px;width:0.70px;height:331.00px;background:#EFEFEF;"></div>
<span style="left:1.79px;top:79px;font-size:6.4px;line-height:6.4px;color:#606060;-webkit-text-stroke:0.1px #606060;transform:scaleX(0.916);">18</span>
<div style="left:13.8px;top:79.6px;width:62.40px;height:43.50px;background:#FFFFFF;box-shadow:0 0 0 0.6px #c9c9c9;"></div>
<span style="left:1.79px;top:130px;font-size:6.4px;line-height:6.4px;color:#606060;-webkit-text-stroke:0.1px #606060;transform:scaleX(0.925);">19</span>
<div style="left:13.8px;top:130.6px;width:62.40px;height:43.50px;background:#FFFFFF;box-shadow:0 0 0 0.6px #c9c9c9;"></div>
<span style="left:1.91px;top:181px;font-size:6.4px;line-height:6.4px;color:#606060;-webkit-text-stroke:0.1px #606060;transform:scaleX(0.898);">20</span>
<div style="left:13.8px;top:182.2px;width:62.40px;height:43.50px;background:#FFFFFF;box-shadow:0 0 0 0.6px #c9c9c9;"></div>
<span style="left:1.91px;top:233px;font-size:6.4px;line-height:6.4px;color:#C5502C;-webkit-text-stroke:0.1px #C5502C;transform:scaleX(0.907);">21</span>
<div style="left:13.8px;top:233.6px;width:62.40px;height:43.50px;background:#FFFFFF;box-shadow:0 0 0 0.6px #c9c9c9;"></div>
<span style="left:1.91px;top:285px;font-size:6.4px;line-height:6.4px;color:#606060;-webkit-text-stroke:0.1px #606060;transform:scaleX(0.907);">22</span>
<div style="left:13.8px;top:285.6px;width:62.40px;height:43.50px;background:#FFFFFF;box-shadow:0 0 0 0.6px #c9c9c9;"></div>
<span style="left:1.91px;top:337px;font-size:6.4px;line-height:6.4px;color:#606060;-webkit-text-stroke:0.1px #606060;transform:scaleX(0.898);">23</span>
<div style="left:13.8px;top:337.6px;width:62.40px;height:43.50px;background:#FFFFFF;box-shadow:0 0 0 0.6px #c9c9c9;"></div>
<span style="left:1.92px;top:388px;font-size:6.4px;line-height:6.4px;color:#606060;-webkit-text-stroke:0.1px #606060;transform:scaleX(0.890);">24</span>
<div style="left:13.8px;top:388.7px;width:62.40px;height:18.00px;background:#FFFFFF;box-shadow:0 0 0 0.6px #c9c9c9;"></div>
<span style="left:17.75px;top:107px;font-size:2.7px;line-height:2.7px;color:#7FB3DE;-webkit-text-stroke:0.06px #7FB3DE;transform:scaleX(1.015);">Inserting Images &amp; Symbols</span>
<div style="left:72px;top:80.2px;width:1.00px;height:1.00px;background:#999;"></div>
<div style="left:72px;top:120.5px;width:1.00px;height:0.80px;background:#ccc;"></div>
<span style="left:17.80px;top:210px;font-size:2.7px;line-height:2.7px;color:#7FB3DE;-webkit-text-stroke:0.06px #7FB3DE;transform:scaleX(0.934);">Formatting Text, Objects &amp; Slides</span>
<div style="left:72px;top:182.8px;width:1.00px;height:1.00px;background:#999;"></div>
<div style="left:72px;top:223px;width:1.00px;height:0.80px;background:#ccc;"></div>
<div style="left:17px;top:132.79999999999998px;width:48.00px;height:0.50px;background:#dadada;"></div>
<div style="left:72px;top:131.2px;width:1.00px;height:1.00px;background:#999;"></div>
<span style="left:17.00px;top:137px;font-size:2.7px;line-height:2.7px;color:#6FA8DC;-webkit-text-stroke:0.06px #6FA8DC;transform:scaleX(0.817);">Activity Symbols</span>
<div style="left:17px;top:142.1px;width:26.00px;height:0.60px;background:#E4E4E4;"></div>
<div style="left:17px;top:143.4px;width:26.00px;height:0.60px;background:#E4E4E4;"></div>
<div style="left:17px;top:144.7px;width:26.00px;height:0.60px;background:#E4E4E4;"></div>
<div style="left:17px;top:146.6px;width:27.00px;height:0.60px;background:#E4E4E4;"></div>
<div style="left:17px;top:147.9px;width:27.00px;height:0.60px;background:#E4E4E4;"></div>
<div style="left:17px;top:149.2px;width:27.00px;height:0.60px;background:#E4E4E4;"></div>
<div style="left:17px;top:150.5px;width:27.00px;height:0.60px;background:#E4E4E4;"></div>
<div style="left:17px;top:151.79999999999998px;width:27.00px;height:0.60px;background:#E4E4E4;"></div>
<div style="left:17px;top:153.79999999999998px;width:26.00px;height:0.60px;background:#E4E4E4;"></div>
<div style="left:17px;top:155.1px;width:26.00px;height:0.60px;background:#E4E4E4;"></div>
<div style="left:17px;top:156.39999999999998px;width:26.00px;height:0.60px;background:#E4E4E4;"></div>
<div style="left:17px;top:159.1px;width:9.00px;height:0.60px;background:#E8E8E8;"></div>
<div style="left:16.8px;top:169.2px;width:2.70px;height:2.00px;background:#3A8FD0;"></div>
<div style="left:19.8px;top:169.8px;width:5.20px;height:0.80px;background:#b8c4cc;"></div>
<div style="left:27px;top:170.6px;width:30.00px;height:0.30px;background:#E2E2E2;"></div>
<div style="left:58px;top:170.39999999999998px;width:7.00px;height:0.50px;background:#E2E2E2;"></div>
<div style="left:66.5px;top:170.39999999999998px;width:6.50px;height:0.50px;background:#E2E2E2;"></div>
<div style="left:12.3px;top:232.9px;width:64.80px;height:45.80px;box-sizing:border-box;border:1.4px solid #C5502C;background:transparent;"></div>
<div style="left:17px;top:235.79999999999998px;width:48.00px;height:0.50px;background:#dadada;"></div>
<div style="left:72px;top:234.2px;width:1.00px;height:1.00px;background:#999;"></div>
<div style="left:17px;top:238.1px;width:18.00px;height:1.70px;background:#A9CFEC;"></div>
<div style="left:17px;top:244.1px;width:10.00px;height:0.70px;background:#C7E0BC;"></div>
<div style="left:17px;top:246.1px;width:25.00px;height:0.50px;background:#E2E2E2;"></div>
<div style="left:17px;top:247.29999999999998px;width:25.00px;height:0.50px;background:#E2E2E2;"></div>
<div style="left:17px;top:248.5px;width:25.00px;height:0.50px;background:#E2E2E2;"></div>
<div style="left:18.5px;top:250.1px;width:13.20px;height:0.50px;background:#E2E2E2;"></div>
<div style="left:18.5px;top:251.5px;width:16.50px;height:0.50px;background:#E2E2E2;"></div>
<div style="left:18.5px;top:252.9px;width:14.30px;height:0.50px;background:#E2E2E2;"></div>
<div style="left:18.5px;top:254.29999999999998px;width:12.10px;height:0.50px;background:#E2E2E2;"></div>
<div style="left:18.5px;top:255.7px;width:11.00px;height:0.50px;background:#E2E2E2;"></div>
<div style="left:18.5px;top:257.1px;width:12.10px;height:0.50px;background:#E2E2E2;"></div>
<div style="left:18.5px;top:258.5px;width:9.90px;height:0.50px;background:#E2E2E2;"></div>
<div style="left:18.5px;top:259.9px;width:8.80px;height:0.50px;background:#E2E2E2;"></div>
<div style="left:16.8px;top:272.2px;width:2.70px;height:2.00px;background:#3A8FD0;"></div>
<div style="left:19.8px;top:272.8px;width:5.20px;height:0.80px;background:#b8c4cc;"></div>
<div style="left:27px;top:273.6px;width:30.00px;height:0.30px;background:#E2E2E2;"></div>
<div style="left:58px;top:273.4px;width:7.00px;height:0.50px;background:#E2E2E2;"></div>
<div style="left:66.5px;top:273.4px;width:6.50px;height:0.50px;background:#E2E2E2;"></div>
<span style="left:16.89px;top:289px;font-size:2.8px;line-height:2.8px;color:#6FA8DC;-webkit-text-stroke:0.06px #6FA8DC;transform:scaleX(0.819);">Chart</span>
<div style="left:43px;top:296.40000000000003px;width:5.50px;height:0.50px;background:#cfcfcf;"></div>
<div style="left:19.4px;top:303.9px;width:2.50px;height:12.10px;background:#1A7FD0;"></div>
<div style="left:23.1px;top:309.5px;width:1.90px;height:6.50px;background:#7EC0EE;"></div>
<div style="left:25.6px;top:311px;width:1.90px;height:5.00px;background:#7EC0EE;"></div>
<div style="left:28.8px;top:308.6px;width:1.90px;height:7.40px;background:#BFE0F7;"></div>
<div style="left:32.5px;top:309px;width:2.50px;height:7.00px;background:#1A7FD0;"></div>
<div style="left:35.7px;top:303.9px;width:2.10px;height:12.10px;background:#7EC0EE;"></div>
<div style="left:38.8px;top:311px;width:1.90px;height:5.00px;background:#7EC0EE;"></div>
<div style="left:41.9px;top:308px;width:1.90px;height:8.00px;background:#BFE0F7;"></div>
<div style="left:45.7px;top:306px;width:2.50px;height:10.00px;background:#1A7FD0;"></div>
<div style="left:49.4px;top:311px;width:1.90px;height:5.00px;background:#7EC0EE;"></div>
<div style="left:52.6px;top:307.5px;width:1.90px;height:8.50px;background:#7EC0EE;"></div>
<div style="left:55.7px;top:305.5px;width:1.90px;height:10.50px;background:#BFE0F7;"></div>
<div style="left:59.5px;top:303px;width:2.50px;height:13.00px;background:#1A7FD0;"></div>
<div style="left:63.2px;top:308.5px;width:1.90px;height:7.50px;background:#7EC0EE;"></div>
<div style="left:65.7px;top:301.5px;width:2.50px;height:14.50px;background:#7EC0EE;"></div>
<div style="left:68.9px;top:303px;width:1.80px;height:13.00px;background:#BFE0F7;"></div>
<div style="left:18.6px;top:298px;width:0.40px;height:18.00px;background:#c8c8c8;"></div>
<div style="left:18.6px;top:316px;width:52.40px;height:0.40px;background:#cfcfcf;"></div>
<div style="left:25px;top:317.3px;width:2.50px;height:0.50px;background:#d8d8d8;"></div>
<div style="left:38px;top:317.3px;width:2.50px;height:0.50px;background:#d8d8d8;"></div>
<div style="left:51px;top:317.3px;width:2.50px;height:0.50px;background:#d8d8d8;"></div>
<div style="left:64px;top:317.3px;width:2.50px;height:0.50px;background:#d8d8d8;"></div>
<div style="left:38px;top:319.2px;width:14.00px;height:0.50px;background:#e0e0e0;"></div>
<div style="left:16.8px;top:324.20000000000005px;width:2.70px;height:2.00px;background:#3A8FD0;"></div>
<div style="left:19.8px;top:324.8px;width:5.20px;height:0.80px;background:#b8c4cc;"></div>
<div style="left:27px;top:325.6px;width:30.00px;height:0.30px;background:#E2E2E2;"></div>
<div style="left:58px;top:325.40000000000003px;width:7.00px;height:0.50px;background:#E2E2E2;"></div>
<div style="left:66.5px;top:325.40000000000003px;width:6.50px;height:0.50px;background:#E2E2E2;"></div>
<span style="left:16.88px;top:342px;font-size:2.7px;line-height:2.7px;color:#8FBDE3;-webkit-text-stroke:0.06px #8FBDE3;transform:scaleX(0.882);">Chart with Totally Title</span>
<div style="left:29px;top:348px;width:3.00px;height:0.60px;background:#ccc;"></div>
<div style="left:57.5px;top:348px;width:3.00px;height:0.60px;background:#ccc;"></div>
<svg style="left:22.6px;top:351.2px;" width="17" height="17" viewBox="0 0 17 17"><circle cx="8.1" cy="8.1" r="8" fill="#9DD0F2"/><path d="M8.1 8.1 L8.1 0.1 A8 8 0 1 1 2.4 13.7Z" fill="#1A7FD0"/><path d="M8.1 8.1 L2.4 13.7 A8 8 0 0 1 0.6 5.5Z" fill="#7EC0EE"/><path d="M8.1 8.1 L0.6 5.5 A8 8 0 0 1 4 1.2Z" fill="#BFE0F7"/></svg>
<svg style="left:51px;top:351.2px;" width="17" height="17" viewBox="0 0 17 17"><circle cx="8.1" cy="8.1" r="8" fill="#BFE0F7"/><path d="M8.1 8.1 L8.1 0.1 A8 8 0 0 1 15.6 5.3Z" fill="#1A7FD0"/><path d="M8.1 8.1 L15.6 5.3 A8 8 0 0 1 12 15.1Z" fill="#7EC0EE"/><path d="M8.1 8.1 L12 15.1 A8 8 0 0 1 0.5 10.5Z" fill="#9DD0F2"/></svg>
<div style="left:24px;top:370.2px;width:2.00px;height:0.50px;background:#d8d8d8;"></div>
<div style="left:27px;top:370.2px;width:2.00px;height:0.50px;background:#d8d8d8;"></div>
<div style="left:31px;top:370.2px;width:2.00px;height:0.50px;background:#d8d8d8;"></div>
<div style="left:35px;top:370.2px;width:2.00px;height:0.50px;background:#d8d8d8;"></div>
<div style="left:52.5px;top:370.2px;width:2.00px;height:0.50px;background:#d8d8d8;"></div>
<div style="left:55.5px;top:370.2px;width:2.00px;height:0.50px;background:#d8d8d8;"></div>
<div style="left:59.5px;top:370.2px;width:2.00px;height:0.50px;background:#d8d8d8;"></div>
<div style="left:63.5px;top:370.2px;width:2.00px;height:0.50px;background:#d8d8d8;"></div>
<div style="left:16.8px;top:376.20000000000005px;width:2.70px;height:2.00px;background:#3A8FD0;"></div>
<div style="left:19.8px;top:376.8px;width:5.20px;height:0.80px;background:#b8c4cc;"></div>
<div style="left:27px;top:377.6px;width:30.00px;height:0.30px;background:#E2E2E2;"></div>
<div style="left:58px;top:377.40000000000003px;width:7.00px;height:0.50px;background:#E2E2E2;"></div>
<div style="left:66.5px;top:377.40000000000003px;width:6.50px;height:0.50px;background:#E2E2E2;"></div>
<div style="left:17px;top:390.9px;width:48.00px;height:0.50px;background:#dadada;"></div>
<div style="left:72px;top:389.3px;width:1.00px;height:1.00px;background:#999;"></div>
<span style="left:16.90px;top:393px;font-size:2.7px;line-height:2.7px;color:#8FBDE3;-webkit-text-stroke:0.06px #8FBDE3;transform:scaleX(0.771);">Connecting Shapes</span>
<div style="left:40.1px;top:398px;width:9.90px;height:5.20px;background:#2C9A2C;"></div>
<div style="left:40.5px;top:404.5px;width:9.50px;height:1.00px;background:#9fbf9f;"></div>
<div style="left:29px;top:402.3px;width:9.40px;height:3.20px;background:#8CC8F0;"></div>
<div style="left:27.5px;top:405.2px;width:11.50px;height:0.80px;background:#bfe0f7;"></div>
<div style="left:93.7px;top:75.7px;width:469.80px;height:321.30px;background:#E6E6E6;"></div>
<div style="left:104.9px;top:82px;width:445.90px;height:308.40px;background:#FFFFFF;box-shadow:0 0 0 0.4px #d4d4d4;"></div>
<svg style="left:524px;top:82.5px;" width="7" height="6" viewBox="0 0 7 6"><path d="M3.5 0.3 L6.8 3 H5.8 V5.8 H1.2 V3 H0.2Z" fill="#8a8a8a"/></svg>
<span style="left:125.19px;top:95px;font-size:4.6px;line-height:4.6px;color:#555555;transform:scaleX(0.891);">Getting Started with Create</span>
<span style="left:182.33px;top:95px;font-size:4.6px;line-height:4.6px;color:#555555;transform:scaleX(0.932);">Organising your Presentation</span>
<span style="left:243.12px;top:95px;font-size:4.6px;line-height:4.6px;color:#555555;transform:scaleX(0.930);">Inserting Slides, Layouts, &amp; Shapes</span>
<span style="left:316.14px;top:95px;font-size:4.6px;line-height:4.6px;color:#555555;transform:scaleX(0.882);">Inserting Images &amp; Symbols</span>
<span style="left:440.72px;top:95px;font-size:4.6px;line-height:4.6px;color:#555555;transform:scaleX(0.911);">Tables</span>
<span style="left:457.04px;top:95px;font-size:4.6px;line-height:4.6px;color:#555555;transform:scaleX(0.968);">Linking</span>
<div style="left:178.29999999999998px;top:95px;width:0.60px;height:4.40px;background:#B4B4B4;"></div>
<div style="left:240.29999999999998px;top:95px;width:0.60px;height:4.40px;background:#B4B4B4;"></div>
<div style="left:313.2px;top:95px;width:0.60px;height:4.40px;background:#B4B4B4;"></div>
<div style="left:369.7px;top:95px;width:0.60px;height:4.40px;background:#B4B4B4;"></div>
<div style="left:438.2px;top:95px;width:0.60px;height:4.40px;background:#B4B4B4;"></div>
<div style="left:455.3px;top:95px;width:0.60px;height:4.40px;background:#B4B4B4;"></div>
<span style="left:371.76px;top:95px;font-size:4.6px;line-height:4.6px;color:#222222;font-weight:700;transform:scaleX(0.877);">Formatting Text, Objects &amp; Slides</span>
<span style="left:125.59px;top:105px;font-size:17px;line-height:17px;color:#45A6E2;transform:scaleX(0.904);">Text Formats Panel</span>
<div style="left:125.4px;top:148.9px;width:199.20px;height:180.30px;box-sizing:border-box;border:0.5px solid #C4C4C4;background:transparent;"></div>
<div style="left:225px;top:139.5px;width:0.60px;height:9.40px;background:#ABABAB;"></div>
<svg style="left:221.5px;top:132.5px;" width="8" height="8" viewBox="0 0 8 8"><circle cx="4" cy="4" r="2.8" fill="#e8e8e8" stroke="#8c8c8c" stroke-width="0.7"/><path d="M2.7 4.5 A1.5 1.5 0 1 1 5.4 3.6" fill="none" stroke="#555" stroke-width="0.6"/><path d="M5.5 2.5 V3.8 H4.3" fill="none" stroke="#555" stroke-width="0.5"/></svg>
<svg style="left:122.4px;top:145.9px;" width="6" height="6" viewBox="0 0 6 6"><circle cx="3" cy="3" r="2.2" fill="#fff" stroke="#8c8c8c" stroke-width="0.6"/></svg>
<svg style="left:222.2px;top:145.9px;" width="6" height="6" viewBox="0 0 6 6"><circle cx="3" cy="3" r="2.2" fill="#fff" stroke="#8c8c8c" stroke-width="0.6"/></svg>
<svg style="left:321.6px;top:145.9px;" width="6" height="6" viewBox="0 0 6 6"><circle cx="3" cy="3" r="2.2" fill="#fff" stroke="#8c8c8c" stroke-width="0.6"/></svg>
<svg style="left:122.4px;top:236.4px;" width="6" height="6" viewBox="0 0 6 6"><circle cx="3" cy="3" r="2.2" fill="#fff" stroke="#8c8c8c" stroke-width="0.6"/></svg>
<svg style="left:321.6px;top:236.4px;" width="6" height="6" viewBox="0 0 6 6"><circle cx="3" cy="3" r="2.2" fill="#fff" stroke="#8c8c8c" stroke-width="0.6"/></svg>
<svg style="left:122.4px;top:326.2px;" width="6" height="6" viewBox="0 0 6 6"><circle cx="3" cy="3" r="2.2" fill="#fff" stroke="#8c8c8c" stroke-width="0.6"/></svg>
<svg style="left:222.2px;top:326.2px;" width="6" height="6" viewBox="0 0 6 6"><circle cx="3" cy="3" r="2.2" fill="#fff" stroke="#8c8c8c" stroke-width="0.6"/></svg>
<svg style="left:321.6px;top:326.2px;" width="6" height="6" viewBox="0 0 6 6"><circle cx="3" cy="3" r="2.2" fill="#fff" stroke="#8c8c8c" stroke-width="0.6"/></svg>
<span style="left:125.13px;top:151px;font-size:8.6px;line-height:8.6px;color:#6AAE4E;transform:scaleX(0.860);">Create for PowerPoint</span>
<span style="left:125.50px;top:165px;font-size:6.4px;line-height:6.4px;color:#555555;transform:scaleX(0.921);">All key functions of Create that you will use everyday are available on the</span>
<span style="left:125.28px;top:173px;font-size:6.4px;line-height:6.4px;color:#555555;transform:scaleX(0.861);">Side Bar and are also duplicated on the Create ribbon. The Side Bar is</span>
<span style="left:125.56px;top:181px;font-size:6.4px;line-height:6.4px;color:#555555;transform:scaleX(0.967);">where you can:</span>
<div style="left:133.1px;top:198.4px;width:91.90px;height:10.10px;background:#C8C8C8;"></div>
<div style="left:125.7px;top:193.70000000000002px;width:1.50px;height:1.50px;background:#2B9BDE;"></div>
<span style="left:133.27px;top:191px;font-size:6.4px;line-height:6.4px;color:#555555;transform:scaleX(0.912);">access all your customized templates</span>
<div style="left:125.7px;top:204.25000000000003px;width:1.50px;height:1.50px;background:#2B9BDE;"></div>
<span style="left:133.26px;top:202px;font-size:6.4px;line-height:6.4px;color:#555555;transform:scaleX(0.944);">change key document information</span>
<div style="left:125.7px;top:214.8px;width:1.50px;height:1.50px;background:#2B9BDE;"></div>
<span style="left:133.26px;top:213px;font-size:6.4px;line-height:6.4px;color:#555555;transform:scaleX(0.928);">add an agenda, divider or appendix slide</span>
<div style="left:125.7px;top:225.35000000000002px;width:1.50px;height:1.50px;background:#2B9BDE;"></div>
<span style="left:133.14px;top:223px;font-size:6.4px;line-height:6.4px;color:#555555;transform:scaleX(0.928);">insert and format tables and text</span>
<div style="left:125.7px;top:235.90000000000003px;width:1.50px;height:1.50px;background:#2B9BDE;"></div>
<span style="left:133.26px;top:234px;font-size:6.4px;line-height:6.4px;color:#555555;transform:scaleX(0.928);">add frequently used slide items</span>
<div style="left:125.7px;top:246.45000000000002px;width:1.50px;height:1.50px;background:#2B9BDE;"></div>
<span style="left:133.27px;top:244px;font-size:6.4px;line-height:6.4px;color:#555555;transform:scaleX(0.913);">add shapes, images and symbols</span>
<div style="left:125.7px;top:257.0px;width:1.50px;height:1.50px;background:#2B9BDE;"></div>
<span style="left:133.27px;top:255px;font-size:6.4px;line-height:6.4px;color:#555555;transform:scaleX(0.906);">access linking functions</span>
<div style="left:125.7px;top:267.55px;width:1.50px;height:1.50px;background:#2B9BDE;"></div>
<span style="left:133.26px;top:265px;font-size:6.4px;line-height:6.4px;color:#555555;transform:scaleX(0.923);">check brand elements</span>
<svg style="left:118px;top:185px;" width="40" height="40" viewBox="0 0 40 40"><circle cx="20" cy="20" r="13.5" fill="none" stroke="#FBE3C2" stroke-width="6" opacity="0.4"/></svg>
<svg style="left:137.6px;top:202.3px;" width="4" height="8" viewBox="0 0 4 8"><path d="M0.5 0.5 H3 M1.75 0.5 V8 M0.5 8 H3" stroke="#222" stroke-width="0.6" fill="none"/></svg>
<div style="left:331.2px;top:148.9px;width:199.60px;height:180.90px;box-sizing:border-box;border:0.6px solid #C4C4C4;background:transparent;"></div>
<span style="left:331.11px;top:151px;font-size:10.5px;line-height:10.5px;color:#4FA8DE;transform:scaleX(0.927);">Click to add text</span>
<svg style="left:404.5px;top:226.5px;opacity:0.75;" width="12" height="12" viewBox="0 0 12 12"><rect x="0.5" y="0.8" width="10.5" height="10" fill="#fff" stroke="#9a9a9a" stroke-width="0.5"/><rect x="0.5" y="0.8" width="10.5" height="1.5" fill="#8a8a8a"/><path d="M4 2.3 V10.8 M7.5 2.3 V10.8 M0.5 5 H11 M0.5 7.9 H11" stroke="#c0c0c0" stroke-width="0.4"/></svg>
<svg style="left:418.5px;top:226.5px;opacity:0.75;" width="12" height="12" viewBox="0 0 12 12"><rect x="1" y="4" width="2" height="6.5" fill="#4A90D0"/><rect x="4.5" y="1" width="2" height="9.5" fill="#F2A66B"/><rect x="8" y="2.5" width="2" height="8" fill="#8a8a8a"/></svg>
<svg style="left:432.5px;top:226.5px;opacity:0.75;" width="12" height="12" viewBox="0 0 12 12"><path d="M0.5 1.5 H6 M0.5 3 H4" stroke="#6aaa50" stroke-width="0.8"/><rect x="3" y="4" width="8.3" height="6.8" fill="#fff" stroke="#9a9a9a" stroke-width="0.5"/><path d="M1 1 L3 4" stroke="#8a8a8a" stroke-width="0.5"/></svg>
<svg style="left:446.5px;top:226.5px;opacity:0.75;" width="12" height="12" viewBox="0 0 12 12"><path d="M5 0.5 L10 3 V8.5 L5 11 L0.5 8.5 V3Z M0.5 3 L5 5.5 L10 3 M5 5.5 V11" fill="none" stroke="#8a8a8a" stroke-width="0.5"/><circle cx="8.5" cy="8.5" r="2.8" fill="#5AA5DE"/></svg>
<svg style="left:404.5px;top:240.2px;opacity:0.75;" width="12" height="12" viewBox="0 0 12 12"><rect x="0.5" y="0.5" width="10.5" height="10" fill="#fff" stroke="#b0b0b0" stroke-width="0.5"/><rect x="6" y="2.3" width="1.2" height="1" fill="#F08040"/><rect x="4.5" y="6" width="6.5" height="4" rx="1" fill="#fff" stroke="#4A90D0" stroke-width="0.6"/></svg>
<svg style="left:418.5px;top:240.2px;opacity:0.75;" width="12" height="12" viewBox="0 0 12 12"><rect x="0.5" y="0.5" width="10.5" height="10" fill="#fff" stroke="#b0b0b0" stroke-width="0.5"/><rect x="7" y="2.3" width="1.2" height="1" fill="#F08040"/><path d="M0.8 10.5 L3.5 6.5 L5.5 9 Z" fill="#4A90D0"/><circle cx="8" cy="8" r="2.5" fill="#fff" stroke="#4A90D0" stroke-width="0.6"/></svg>
<svg style="left:432.5px;top:240.2px;opacity:0.75;" width="12" height="12" viewBox="0 0 12 12"><rect x="0.8" y="1.5" width="10" height="8" fill="#fff" stroke="#8a8a8a" stroke-width="0.6"/><rect x="0.8" y="1.5" width="10" height="1.2" fill="#8a8a8a"/></svg>
<svg style="left:446.5px;top:240.2px;opacity:0.75;" width="12" height="12" viewBox="0 0 12 12"><path d="M1 3 Q3 6 6 4 L8.5 1 L10 2.5 L7 6 Q5 8 2 6Z" fill="#4A90D0"/><path d="M3 10.5 Q5 7 9 8 Q8 11 5 10.5" fill="none" stroke="#9a9a9a" stroke-width="0.5"/></svg>
<svg style="left:126px;top:361px;" width="19" height="17" viewBox="0 0 19 17"><path d="M0.5 3.2 L9 0.5 L11.5 14.5 L3 16.8Z" fill="#E8785A"/><path d="M2.5 3.8 L10.5 2.2 L12.5 15.5 L4.5 16.8Z" fill="#8DC383"/><path d="M4 3.8 L18.4 3.4 L18.4 12.2 L14.6 16.7 L4.6 16.7Z" fill="#2F95E0"/><path d="M14.6 16.7 L14.6 12.6 L18.4 12.2Z" fill="#CFE6F7"/></svg>
<span style="left:146.08px;top:365px;font-size:6.4px;line-height:6.4px;color:#333333;font-weight:700;transform:scaleX(1.105);">Presentation</span>
<svg style="left:189px;top:364.5px;" width="2" height="2" viewBox="0 0 2 2"><circle cx="1" cy="1" r="0.6" fill="#666"/></svg>
<span style="left:146.25px;top:372px;font-size:6.3px;line-height:6.3px;color:#A3A3A3;">Solutions</span>
<div style="left:198px;top:376.5px;width:211.00px;height:0.40px;background:#D0D0D0;"></div>
<span style="left:416.39px;top:374px;font-size:4.6px;line-height:4.6px;color:#7a7a7a;-webkit-text-stroke:0.06px #7a7a7a;transform:scaleX(0.934);">Create with Preference Manager</span>
<span style="left:490.09px;top:374px;font-size:4.6px;line-height:4.6px;color:#7a7a7a;-webkit-text-stroke:0.06px #7a7a7a;transform:scaleX(0.916);">29 January 2021</span>
<span style="left:526.38px;top:374px;font-size:4.6px;line-height:4.6px;color:#2B9BDE;-webkit-text-stroke:0.06px #2B9BDE;transform:scaleX(0.941);">21</span>
<div style="left:93.7px;top:397px;width:469.80px;height:9.70px;background:#E6E6E6;"></div>
<div style="left:93.9px;top:397.4px;width:5.50px;height:5.80px;background:#FFFFFF;"></div>
<svg style="left:95.4px;top:399px;" width="2" height="3" viewBox="0 0 2 3"><path d="M1.6 0 V3 L0 1.5Z" fill="#555"/></svg>
<div style="left:103.4px;top:397.9px;width:448.10px;height:5.10px;background:#FFFFFF;box-shadow:0 0 0 0.5px #d0d0d0;"></div>
<div style="left:557.5px;top:397.4px;width:5.50px;height:5.80px;background:#FFFFFF;"></div>
<svg style="left:559.4px;top:399px;" width="2" height="3" viewBox="0 0 2 3"><path d="M0 0 V3 L1.6 1.5Z" fill="#555"/></svg>
<div style="left:129.6px;top:390.4px;width:0.30px;height:6.60px;background:#C8C8C8;"></div>
<div style="left:530px;top:390.4px;width:0.30px;height:6.60px;background:#C8C8C8;"></div>
<div style="left:563.3px;top:75.7px;width:6.70px;height:301.30px;background:#DFDFDF;"></div>
<div style="left:563.8px;top:76.6px;width:5.80px;height:5.00px;background:#FFFFFF;"></div>
<svg style="left:565.2px;top:78px;" width="3" height="2" viewBox="0 0 3 2"><path d="M0 1.6 H3 L1.5 0Z" fill="#555"/></svg>
<div style="left:563.8px;top:237.3px;width:6.00px;height:6.70px;background:#FFFFFF;"></div>
<div style="left:563.8px;top:378.5px;width:5.80px;height:4.80px;background:#FFFFFF;"></div>
<svg style="left:565.2px;top:380px;" width="3" height="2" viewBox="0 0 3 2"><path d="M0 0 H3 L1.5 1.6Z" fill="#555"/></svg>
<svg style="left:565.2px;top:385.5px;" width="3" height="4" viewBox="0 0 3 4"><path d="M0.2 0.6 H2.8 M1.5 0.9 L2.8 2.4 H0.2Z M0.5 2.4 H2.5 V3.8 H0.5Z" fill="#666" stroke="#666" stroke-width="0.3"/></svg>
<svg style="left:565.2px;top:391px;" width="3" height="4" viewBox="0 0 3 4"><path d="M0.2 3.4 H2.8 M1.5 3.1 L2.8 1.6 H0.2Z M0.5 0.2 H2.5 V1.6 H0.5Z" fill="#666" stroke="#666" stroke-width="0.3"/></svg>
<div style="left:570px;top:75.7px;width:169.00px;height:331.00px;background:#E6E6E6;"></div>
<div style="left:570px;top:75.7px;width:138.20px;height:331.00px;background:#E9E9E9;"></div>
<div style="left:572.5px;top:75.7px;width:135.70px;height:331.00px;background:#EDEDED;"></div>
<div style="left:708.2px;top:75.7px;width:0.80px;height:331.00px;background:#F2F4F6;"></div>
<span style="left:575.35px;top:81px;font-size:9px;line-height:9px;color:#C46A52;transform:scaleX(0.857);">Text</span>
<svg style="left:681.5px;top:82.5px;" width="4" height="3" viewBox="0 0 4 3"><path d="M0 0 H3.4 L1.7 2Z" fill="#555"/></svg>
<svg style="left:696.5px;top:81.5px;" width="6" height="6" viewBox="0 0 6 6"><path d="M0.5 0.5 L5 5 M5 0.5 L0.5 5" stroke="#444" stroke-width="0.8"/></svg>
<svg style="left:715px;top:82.5px;" width="4" height="3" viewBox="0 0 4 3"><path d="M0 0 H3.4 L1.7 2Z" fill="#555"/></svg>
<svg style="left:727px;top:81.5px;" width="6" height="6" viewBox="0 0 6 6"><path d="M0.5 0.5 L5 5 M5 0.5 L0.5 5" stroke="#444" stroke-width="0.8"/></svg>
<div style="left:572.9px;top:91.2px;width:132.10px;height:15.80px;background:#C5502C;"></div>
<svg style="left:579.5px;top:93.8px;" width="13" height="12" viewBox="0 0 13 12"><path d="M2.5 0.8 H8.8 L10.3 2.3" fill="none" stroke="#f6d5ca" stroke-width="0.7"/><rect x="0.8" y="2" width="8.5" height="8.5" rx="0.6" fill="none" stroke="#ffffff" stroke-width="0.9"/><path d="M2.9 8.6 L5.05 3.6 L7.2 8.6 M3.7 6.9 H6.4" fill="none" stroke="#fff" stroke-width="0.8"/><circle cx="10.5" cy="9.8" r="1.3" fill="none" stroke="#fff" stroke-width="0.7"/></svg>
<span style="left:593.88px;top:97px;font-size:6.4px;line-height:6.4px;color:#FFFFFF;transform:scaleX(0.941);">Text Formats</span>
<svg style="left:578.5px;top:112.5px;" width="10" height="9" viewBox="0 0 10 9"><rect x="0.8" y="0.8" width="7" height="7" fill="#fff" stroke="#C5502C" stroke-width="1"/><path d="M2.5 6.8 L4.3 2.5 L6.1 6.8 M3.2 5.3 H5.4" fill="none" stroke="#C5502C" stroke-width="0.8"/></svg>
<svg style="left:591.5px;top:112.5px;" width="10" height="9" viewBox="0 0 10 9"><rect x="3" y="0.8" width="6" height="6" fill="none" stroke="#7a7a7a" stroke-width="0.9"/><rect x="1" y="3" width="6" height="5.2" fill="#EAEAEA" stroke="#7a7a7a" stroke-width="0.9"/><path d="M2 5.5 H5 M2 7 H4" stroke="#7a7a7a" stroke-width="0.5"/></svg>
<div style="left:579px;top:124.9px;width:117.50px;height:0.90px;background:#E8A48F;"></div>
<div style="left:578.9px;top:130.5px;width:119.60px;height:272.50px;background:#FFFFFF;"></div>
<span style="left:582.33px;top:135px;font-size:9.6px;line-height:9.6px;color:#55ACE0;transform:scaleX(0.870);">Master Text Style 1</span>
<span style="left:582.47px;top:152px;font-size:7.7px;line-height:7.7px;color:#55ACE0;transform:scaleX(0.868);">Master Text Style 2</span>
<span style="left:582.47px;top:166px;font-size:7.7px;line-height:7.7px;color:#78B45E;transform:scaleX(0.867);">Master Text Style 3</span>
<span style="left:581.57px;top:179px;font-size:6px;line-height:6px;color:#505050;transform:scaleX(0.893);">Master Text Style 4</span>
<div style="left:582.6px;top:191.6px;width:1.20px;height:1.20px;background:#2B9BDE;"></div>
<span style="left:589.58px;top:191px;font-size:6px;line-height:6px;color:#505050;transform:scaleX(0.874);">Master Text Style 5</span>
<span style="left:581.64px;top:203px;font-size:4.6px;line-height:4.6px;color:#3A9ADB;-webkit-text-stroke:0.06px #3A9ADB;transform:scaleX(0.981);">Heading 1</span>
<span style="left:581.64px;top:213px;font-size:4.6px;line-height:4.6px;color:#3A9ADB;-webkit-text-stroke:0.06px #3A9ADB;transform:scaleX(0.981);">Heading 2</span>
<span style="left:581.64px;top:223px;font-size:4.6px;line-height:4.6px;color:#6AAE4E;-webkit-text-stroke:0.06px #6AAE4E;transform:scaleX(0.979);">Heading 3</span>
<div style="left:711.6px;top:91.2px;width:24.40px;height:311.80px;background:#C5502C;"></div>
<svg style="left:717.3px;top:94.6px;transform:scale(1.1);transform-origin:0 0;" width="13" height="13" viewBox="0 0 13 13"><path d="M4.6 1.6 V0.7 H10.5" fill="none" stroke="#fff" stroke-width="0.6"/><rect x="4.6" y="1.6" width="7.6" height="7.4" fill="#fff"/><circle cx="3.8" cy="8.9" r="3.3" fill="#C5502C" stroke="#fff" stroke-width="0.9"/><path d="M3.8 6.9 V10.9 M1.8 8.9 H5.8" stroke="#fff" stroke-width="0.8"/></svg>
<svg style="left:717.3px;top:114.89999999999999px;transform:scale(1.1);transform-origin:0 0;" width="13" height="13" viewBox="0 0 13 13"><rect x="1" y="1" width="11" height="11" rx="1" fill="none" stroke="#fff" stroke-width="0.9"/><path d="M3.2 3.8 H4.2 M3.2 8.2 H4.2" stroke="#fff" stroke-width="1.2"/><path d="M6 3.8 H10 M6 8.2 H10" stroke="#fff" stroke-width="0.8"/></svg>
<svg style="left:717.3px;top:135.2px;transform:scale(1.1);transform-origin:0 0;" width="13" height="13" viewBox="0 0 13 13"><rect x="1" y="1" width="11" height="11" rx="1" fill="none" stroke="#fff" stroke-width="0.9"/><path d="M1 3.5 H12" stroke="#fff" stroke-width="0.8"/><rect x="2.8" y="5.3" width="3" height="2.5" fill="#fff"/><path d="M7 6 H10.5 M7 8 H10.5 M2.8 10 H10.5" stroke="#fff" stroke-width="0.6"/></svg>
<svg style="left:717.3px;top:155.5px;transform:scale(1.1);transform-origin:0 0;" width="13" height="13" viewBox="0 0 13 13"><rect x="1" y="1.5" width="11" height="10" fill="none" stroke="#fff" stroke-width="0.9"/><path d="M1 4 H12 M1 6.5 H12 M1 9 H12 M4.7 1.5 V11.5 M8.3 1.5 V11.5" stroke="#fff" stroke-width="0.8"/></svg>
<svg style="left:717.3px;top:175.8px;transform:scale(1.1);transform-origin:0 0;" width="13" height="13" viewBox="0 0 13 13"><rect x="1" y="1.5" width="11" height="10" fill="none" stroke="#fff" stroke-width="0.9"/><path d="M1 4 H12 M1 6.5 H12 M1 9 H12 M4.7 1.5 V11.5" stroke="#fff" stroke-width="0.8"/><path d="M6.5 5 L11 10.5" stroke="#fff" stroke-width="1"/></svg>
<svg style="left:717.3px;top:196.1px;transform:scale(1.1);transform-origin:0 0;" width="13" height="13" viewBox="0 0 13 13"><path d="M2.5 0.8 H9 L10.5 2.3" fill="none" stroke="#fff" stroke-width="0.6"/><rect x="1" y="2" width="9" height="9" rx="0.6" fill="none" stroke="#fff" stroke-width="0.9"/><path d="M3.2 9.2 L5.5 3.8 L7.8 9.2 M4 7.5 H7" fill="none" stroke="#fff" stroke-width="0.8"/><circle cx="11" cy="11" r="1.3" fill="none" stroke="#fff" stroke-width="0.7"/></svg>
<svg style="left:717.3px;top:216.4px;transform:scale(1.1);transform-origin:0 0;" width="13" height="13" viewBox="0 0 13 13"><path d="M2 11.5 V3.5 L6 1 L10.5 3.5 V11.5 Z" fill="none" stroke="#fff" stroke-width="0.9"/><circle cx="6.2" cy="6" r="1.8" fill="none" stroke="#fff" stroke-width="0.9"/><path d="M6.2 7.8 L8.5 11.5" stroke="#fff" stroke-width="0.9"/></svg>
<svg style="left:717.3px;top:236.7px;transform:scale(1.1);transform-origin:0 0;" width="13" height="13" viewBox="0 0 13 13"><rect x="1" y="1.5" width="11" height="10" fill="none" stroke="#fff" stroke-width="0.9"/><path d="M1.5 10.5 L5 6 L7.5 8.5 L9 7 L11.5 10.5Z" fill="#fff"/><circle cx="8.5" cy="4" r="1.2" fill="#fff"/></svg>
<svg style="left:717.3px;top:257.0px;transform:scale(1.1);transform-origin:0 0;" width="13" height="13" viewBox="0 0 13 13"><rect x="1" y="1" width="8" height="8" fill="none" stroke="#fff" stroke-width="0.9"/><rect x="3.5" y="3.5" width="8" height="8" fill="#C5502C" stroke="#fff" stroke-width="0.9"/><path d="M5.5 9.5 L9.5 5.5" stroke="#fff" stroke-width="0.7"/></svg>
<svg style="left:717.3px;top:277.3px;transform:scale(1.1);transform-origin:0 0;" width="13" height="13" viewBox="0 0 13 13"><path d="M1.5 1 H8.5 V6 M1.5 1 V11.5 H6" fill="none" stroke="#fff" stroke-width="0.9"/><path d="M3 3.5 H7 M3 5.5 H7 M3 7.5 H5" stroke="#fff" stroke-width="0.7"/><circle cx="9" cy="9" r="3" fill="#fff"/><path d="M7.6 9 L8.6 10 L10.4 8" fill="none" stroke="#C5502C" stroke-width="0.8"/></svg>
<svg style="left:717.3px;top:297.6px;transform:scale(1.1);transform-origin:0 0;" width="13" height="13" viewBox="0 0 13 13"><rect x="1" y="1.5" width="3" height="10" fill="none" stroke="#fff" stroke-width="0.9"/><rect x="4.8" y="1.5" width="3" height="10" fill="none" stroke="#fff" stroke-width="0.9"/><rect x="8.3" y="6.5" width="3.8" height="5" fill="#fff"/><path d="M9.2 6.5 V5.2 A1 1 0 0 1 11.2 5.2 V6.5" fill="none" stroke="#fff" stroke-width="0.7"/></svg>
<span style="left:2.82px;top:408px;font-size:5.2px;line-height:5.2px;color:#555555;-webkit-text-stroke:0.06px #555555;transform:scaleX(0.854);">Slide 21 of 0... 39</span>
<span style="left:48.75px;top:408px;font-size:5.2px;line-height:5.2px;color:#555555;-webkit-text-stroke:0.06px #555555;transform:scaleX(0.852);">English (United States)</span>
<div style="left:599px;top:406.7px;width:15.00px;height:6.80px;background:#D2D0CE;"></div>
<svg style="left:603px;top:407.5px;" width="8" height="5.5" viewBox="0 0 8 5.5"><rect x="0.5" y="0.5" width="7" height="4.5" fill="none" stroke="#555" stroke-width="0.6"/><path d="M3 0.5 V5 M0.5 2.7 H3" stroke="#555" stroke-width="0.5"/></svg>
<svg style="left:618px;top:407.5px;" width="8" height="5.5" viewBox="0 0 8 5.5"><rect x="0.5" y="0.5" width="3" height="2" fill="none" stroke="#666" stroke-width="0.5"/><rect x="4.5" y="0.5" width="3" height="2" fill="none" stroke="#666" stroke-width="0.5"/><rect x="0.5" y="3" width="3" height="2" fill="none" stroke="#666" stroke-width="0.5"/><rect x="4.5" y="3" width="3" height="2" fill="none" stroke="#666" stroke-width="0.5"/></svg>
<svg style="left:633px;top:407.5px;" width="8" height="5.5" viewBox="0 0 8 5.5"><rect x="1" y="0.5" width="6" height="4.5" fill="none" stroke="#666" stroke-width="0.6"/><path d="M1 2 H7 M1 3.5 H7" stroke="#666" stroke-width="0.4"/></svg>
<svg style="left:648.5px;top:407.2px;" width="8" height="6" viewBox="0 0 8 6"><rect x="0.5" y="0.5" width="6" height="3" fill="none" stroke="#666" stroke-width="0.6"/><path d="M3.5 3.5 V5.5 M2 5.5 H5" stroke="#666" stroke-width="0.6"/></svg>
<div style="left:662.5px;top:409.8px;width:2.50px;height:0.50px;background:#666;"></div>
<div style="left:668px;top:409.8px;width:38.00px;height:0.40px;background:#9a9a9a;"></div>
<div style="left:687.3px;top:407.5px;width:1.70px;height:5.00px;background:#555;"></div>
<svg style="left:708.3px;top:408.5px;" width="3" height="3" viewBox="0 0 3 3"><path d="M1.5 0 V3 M0 1.5 H3" stroke="#666" stroke-width="0.5"/></svg>
<span style="left:716.19px;top:408px;font-size:5.2px;line-height:5.2px;color:#555555;-webkit-text-stroke:0.06px #555555;transform:scaleX(0.847);">112%</span>
<svg style="left:731px;top:406.8px;" width="6" height="6" viewBox="0 0 6 6"><path d="M3 0.3 V5.7 M0.3 3 H5.7" stroke="#555" stroke-width="0.5"/><rect x="1.5" y="1.5" width="3" height="3" fill="none" stroke="#555" stroke-width="0.6" transform="rotate(45 3 3)"/></svg>
<div style="left:93.5px;top:149.4px;width:9.00px;height:1.00px;background:#CFCFCF;"></div>
<div style="left:93.5px;top:328.8px;width:9.00px;height:1.00px;background:#CFCFCF;"></div>
<div style="left:553px;top:149.6px;width:9.00px;height:1.00px;background:#D2D2D2;"></div>
<div style="left:553px;top:328.8px;width:9.00px;height:1.00px;background:#D2D2D2;"></div>
</body></html>
